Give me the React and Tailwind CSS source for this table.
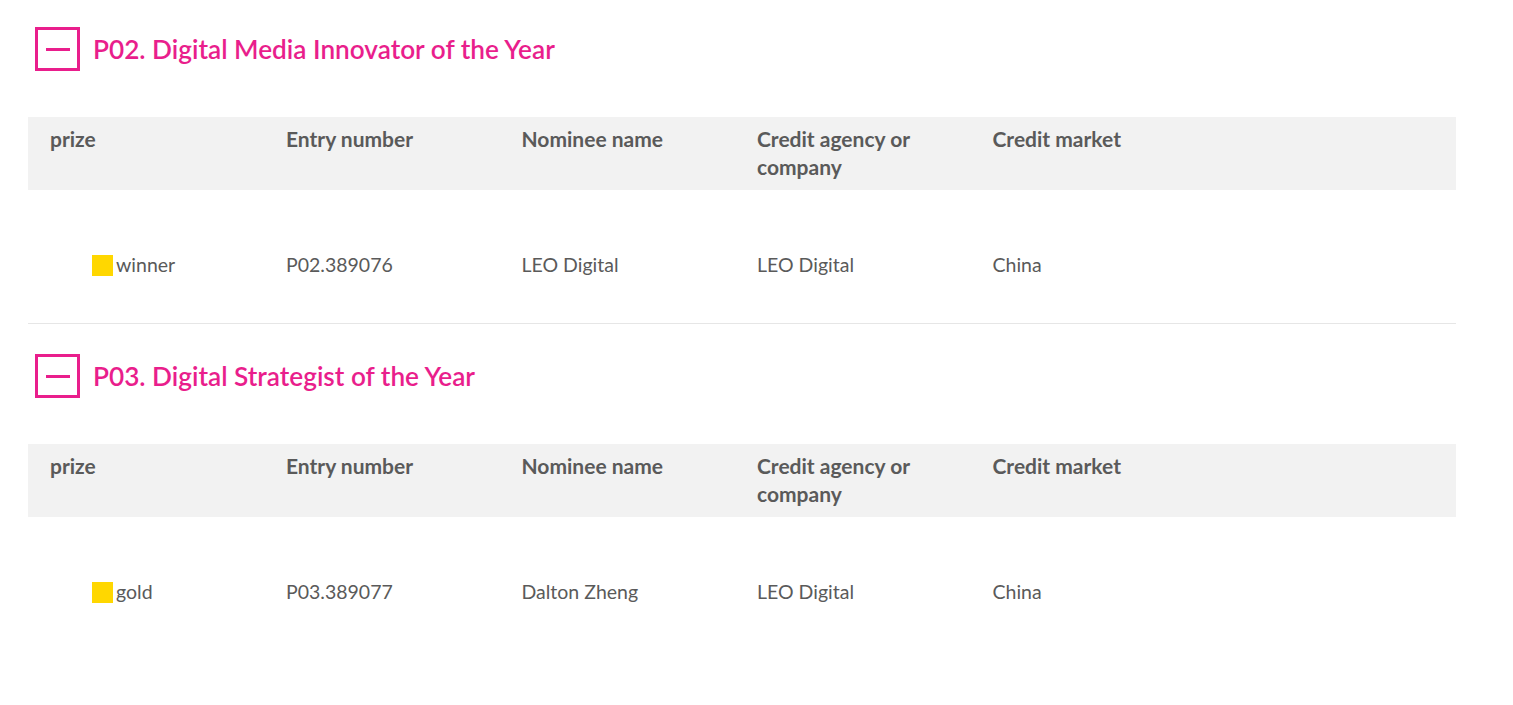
import React from "react";

const sections = [
  {
    title: "P02. Digital Media Innovator of the Year",
    rows: [
      { prize: "winner", entry: "P02.389076", nominee: "LEO Digital", agency: "LEO Digital", market: "China" },
    ],
  },
  {
    title: "P03. Digital Strategist of the Year",
    rows: [
      { prize: "gold", entry: "P03.389077", nominee: "Dalton Zheng", agency: "LEO Digital", market: "China" },
    ],
  },
];

const cols = "grid grid-cols-[236px_235.5px_235.5px_235.5px_1fr]";

const Section = ({ title, rows, first, last }) => (
  <section className={first ? "pt-[27px]" : "pt-[30px]"}>
    {/* Collapse toggle + category title */}
    <div className="flex items-center pl-[7px]">
      <button className="w-[45px] h-[44px] border-[3px] border-[#e91e8c] flex items-center justify-center">
        <span className="block w-[24px] h-[3px] bg-[#e91e8c]"></span>
      </button>
      <h2 className="ml-[13px] text-[26.2px] font-semibold text-[#e91e8c] leading-none">{title}</h2>
    </div>

    <div className="mt-[46px]">
      <div className={`${cols} bg-[#f2f2f2] pt-[8px] pb-[9px] text-[21px] font-bold leading-[28px] text-[#5a5a5a]`}>
        <div className="pl-[22px]">prize</div>
        <div className="pl-[22px]">Entry number</div>
        <div className="pl-[22px]">Nominee name</div>
        <div className="pl-[22px] pr-[40px]">Credit agency or company</div>
        <div className="pl-[22px]">Credit market</div>
      </div>
      {rows.map((r, i) => (
        <div
          key={i}
          className={`${cols} pt-[61px] pb-[44px] text-[19.5px] leading-[28px] text-[#5a5a5a] ${last ? "" : "border-b border-[#e6e6e6]"}`}
        >
          <div className="pl-[64px] flex items-center">
            <span className="w-[21px] h-[21px] bg-[#ffd700] mr-[3px]"></span>
            {r.prize}
          </div>
          <div className="pl-[22px]">{r.entry}</div>
          <div className="pl-[22px]">{r.nominee}</div>
          <div className="pl-[22px]">{r.agency}</div>
          <div className="pl-[22px]">{r.market}</div>
        </div>
      ))}
    </div>
  </section>
);

const App = () => {
  return (
    <div className="min-h-screen bg-white font-['Lato',sans-serif]">
      <div className="ml-[28px] w-[1428px]">
        {sections.map((s, i) => (
          <Section
            key={i}
            title={s.title}
            rows={s.rows}
            first={i === 0}
            last={i === sections.length - 1}
          />
        ))}
      </div>
    </div>
  );
};

export default App;
